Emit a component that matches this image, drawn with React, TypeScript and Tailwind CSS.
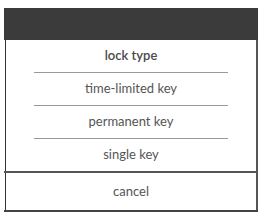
const options = ['time-limited key', 'permanent key', 'single key']

export default function App() {
  return (
    <div
      className="h-[218px] w-[264px] bg-white pt-[8px] pl-[4px]"
      style={{ fontFamily: 'Lato, "Liberation Sans", sans-serif' }}
    >
      <div className="h-[32px] w-[254px] bg-[#3b3b3b]" />
      <div className="ml-[1px] w-[253px] border-l border-r-2 border-l-[#333] border-r-[#555] bg-white">
        <div className="flex h-[32px] items-center justify-center text-[13px] font-semibold text-[#4a4a4a]">
          lock type
        </div>
        {options.map((o) => (
          <div key={o} className="mx-[28px] flex h-[33px] items-center justify-center border-t border-[#999] text-[13px] text-[#555]">
            {o}
          </div>
        ))}
      </div>
      <div className="h-[2px] w-[254px] bg-[#555]" />
      <div className="ml-[1px] flex h-[37px] w-[253px] items-center justify-center border-l border-r-2 border-l-[#333] border-r-[#555] text-[13px] text-[#555]">
        cancel
      </div>
      <div className="h-[2px] w-[254px] bg-[#444]" />
    </div>
  )
}
